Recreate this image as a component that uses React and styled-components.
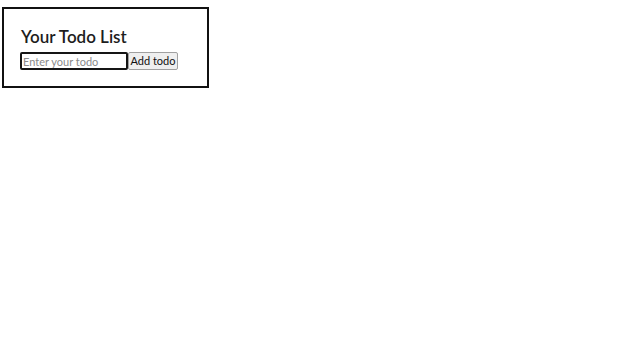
import React, { useState } from 'react';
import styled, { createGlobalStyle } from 'styled-components';

const GlobalStyle = createGlobalStyle`
  body {
    margin: 0;
    background: #ffffff;
    font-family: 'Lato', 'Open Sans', sans-serif;
  }
`;

const Page = styled.div`
  padding: 7px 0 0 2px;
`;

const TodoCard = styled.div`
  width: 187px;
  height: 77px;
  border: 2px solid #111;
  padding: 0 0 0 16px;
`;

const Title = styled.h2`
  margin: 17px 0 4px 1px;
  font-size: 17px;
  font-weight: 600;
  color: #1d1d1d;
  line-height: 22px;
`;

const Row = styled.div`
  display: flex;
  align-items: stretch;
  height: 18px;
`;

const TodoInput = styled.input`
  width: 108px;
  box-sizing: border-box;
  height: 18px;
  border: 2px solid #151515;
  border-radius: 2px;
  padding: 0 1px;
  font-family: inherit;
  font-size: 11px;
  line-height: 14px;
  color: #222;
  outline: none;
  &::placeholder {
    color: #8a8a8a;
  }
`;

const AddButton = styled.button`
  width: 50px;
  height: 18px;
  box-sizing: border-box;
  border: 1px solid #a0a0a0;
  border-radius: 2px;
  background: #efefef;
  font-family: inherit;
  font-size: 11px;
  line-height: 14px;
  color: #111;
  padding: 0 0 1px;
  cursor: pointer;
`;

export default function App() {
  const [text, setText] = useState('');
  const [todos, setTodos] = useState([]);

  const addTodo = () => {
    if (!text.trim()) return;
    setTodos([...todos, text]);
    setText('');
  };

  return (
    <>
      <GlobalStyle />
      <Page>
        <TodoCard>
          <Title>Your Todo List</Title>
          <Row>
            <TodoInput
              placeholder='Enter your todo'
              value={text}
              onChange={e => setText(e.target.value)}
            />
            <AddButton onClick={addTodo}>Add todo</AddButton>
          </Row>
        </TodoCard>
      </Page>
    </>
  );
}
